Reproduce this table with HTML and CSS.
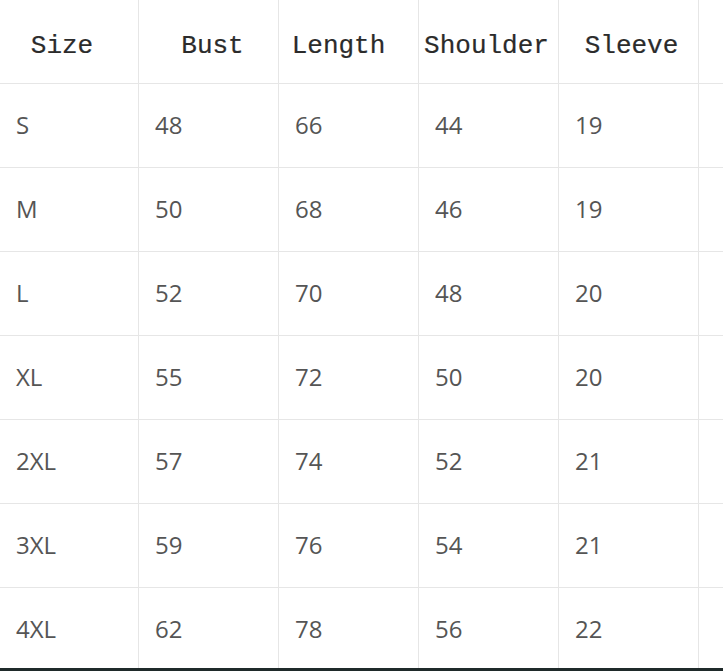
FILE: index.html
```html
<!DOCTYPE html>
<html>
<head>
<meta charset="utf-8">
<link rel="stylesheet" href="styles.css">
</head>
<body>
<div class="page">
  <div class="table">
    <div class="row head">
      <div class="cell">Size</div><div class="cell">Bust</div><div class="cell">Length</div><div class="cell">Shoulder</div><div class="cell">Sleeve</div><div class="cell"></div>
    </div>
    <div class="row"><div class="cell">S</div><div class="cell">48</div><div class="cell">66</div><div class="cell">44</div><div class="cell">19</div><div class="cell"></div></div>
    <div class="row"><div class="cell">M</div><div class="cell">50</div><div class="cell">68</div><div class="cell">46</div><div class="cell">19</div><div class="cell"></div></div>
    <div class="row"><div class="cell">L</div><div class="cell">52</div><div class="cell">70</div><div class="cell">48</div><div class="cell">20</div><div class="cell"></div></div>
    <div class="row"><div class="cell">XL</div><div class="cell">55</div><div class="cell">72</div><div class="cell">50</div><div class="cell">20</div><div class="cell"></div></div>
    <div class="row"><div class="cell">2XL</div><div class="cell">57</div><div class="cell">74</div><div class="cell">52</div><div class="cell">21</div><div class="cell"></div></div>
    <div class="row"><div class="cell">3XL</div><div class="cell">59</div><div class="cell">76</div><div class="cell">54</div><div class="cell">21</div><div class="cell"></div></div>
    <div class="row last"><div class="cell">4XL</div><div class="cell">62</div><div class="cell">78</div><div class="cell">56</div><div class="cell">22</div><div class="cell"></div></div>
  </div>
  <div class="bar"></div>
</div>
</body>
</html>
```
FILE: styles.css
```css
* {
  box-sizing: border-box;
}
html, body {
  margin: 0;
  padding: 0;
  background: #fff;
  overflow: hidden;
}
.page {
  width: 723px;
  height: 671px;
  overflow: hidden;
  display: flex;
  flex-direction: column;
}
.table {
  display: flex;
  flex-direction: column;
  width: 900px;
}
.row {
  display: grid;
  grid-template-columns: 139px 140px 140px 140px 140px 140px;
  height: 84px;
  border-bottom: 1px solid #e6e6e6;
}
.row.last {
  height: 80px;
  border-bottom: none;
}
.cell {
  border-right: 1px solid #e6e6e6;
  display: flex;
  align-items: center;
  padding-left: 16px;
  padding-bottom: 3px;
  font-family: "Open Sans", "Noto Sans", sans-serif;
  font-size: 24px;
  color: #555;
  min-width: 0;
}
.row.last .cell {
  padding-bottom: 0;
}
.head .cell {
  justify-content: center;
  padding-left: 0;
  padding-bottom: 0;
  padding-top: 8px;
  font-family: "Liberation Mono", "DejaVu Sans Mono", monospace;
  font-size: 26px;
  color: #2b2b2b;
  -webkit-text-stroke: 0.2px #2b2b2b;
}
.head .cell:nth-child(1) { padding-right: 14px; }
.head .cell:nth-child(2) { padding-left: 8px; }
.head .cell:nth-child(3) { padding-right: 20px; }
.head .cell:nth-child(4) { padding-right: 4px; }
.head .cell:nth-child(5) { padding-left: 6px; }
.bar {
  height: 3px;
  background: #1f2a2a;
}
```
